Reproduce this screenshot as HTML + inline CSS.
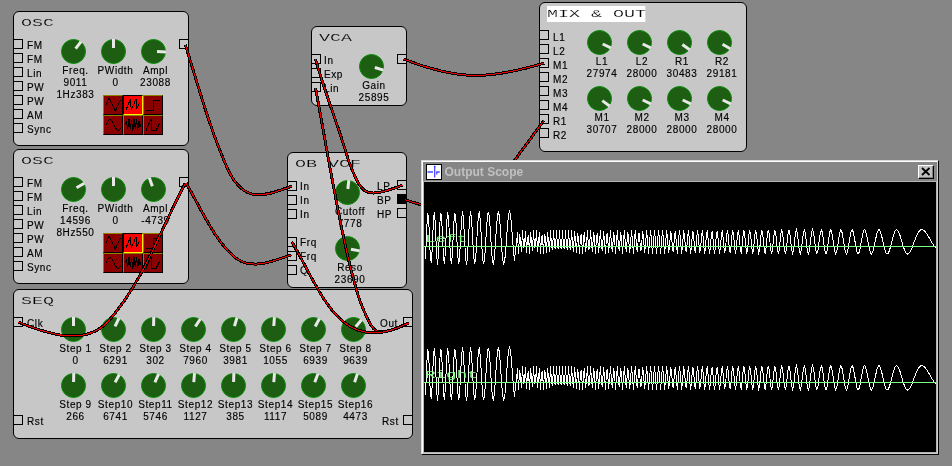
<!DOCTYPE html>
<html><head><meta charset="utf-8"><title>Synth</title>
<style>
html,body{margin:0;padding:0;}
body{width:952px;height:466px;background:#868686;position:relative;overflow:hidden;font-family:"Liberation Sans",sans-serif;font-size:11px;color:#000;}
#root{position:absolute;left:0;top:0;width:952px;height:466px;will-change:transform;}
.pn{position:absolute;box-sizing:border-box;background:#c7c7c7;border:1px solid #000;border-radius:6px;}
.tt{position:absolute;font-family:"Liberation Mono",monospace;font-size:11px;line-height:15px;padding-top:1px;white-space:pre;transform:scaleX(1.667);transform-origin:0 0;-webkit-text-stroke:0.16px #c7c7c7;}
.pt{position:absolute;box-sizing:border-box;width:10px;height:10px;border:1px solid #000;background:#c7c7c7;}
.lb{position:absolute;font-size:10px;letter-spacing:0.6px;line-height:12px;padding-top:1px;white-space:nowrap;-webkit-text-stroke:0.15px #000;}
.cl{position:absolute;width:80px;text-align:center;font-size:10px;letter-spacing:0.6px;line-height:12px;padding-top:1px;white-space:nowrap;-webkit-text-stroke:0.15px #000;}
.kn{position:absolute;box-sizing:border-box;width:25px;height:25px;border-radius:50%;background:#1e5e12;border:1px solid #0a8a0a;}
.kn i{position:absolute;left:10px;top:-1px;width:3px;height:25px;transform-origin:1.5px 12.5px;}
.kn i:before{content:"";position:absolute;left:0;top:0;width:3px;height:9px;background:#e8e8e8;}
.wb{position:absolute;box-sizing:border-box;width:20px;height:20px;border:1px solid;}
.wires{position:absolute;left:0;top:0;}
.win{position:absolute;box-sizing:border-box;border:1px solid;border-color:#d8d8d8 #000 #000 #d8d8d8;}
.win2{position:absolute;left:0;top:0;right:0;bottom:0;box-sizing:border-box;background:#868686;border:1px solid;border-color:#fff #d0d0d0 #d0d0d0 #fff;}
.ico{position:absolute;left:3px;top:2px;width:14px;height:14px;background:#fff;border:1px solid #000;}
.wt{position:absolute;left:21.5px;top:3px;font-weight:bold;font-size:12px;line-height:14px;color:#c0c0c0;white-space:nowrap;}
.cb{position:absolute;left:495px;top:3px;width:14px;height:12px;background:#c0c0c0;border:1px solid;border-color:#fff #000 #000 #fff;box-shadow:inset -1px -1px 0 #808080;}
.cv{position:absolute;left:0px;top:19px;width:512px;height:270px;background:#000;border:1px solid #b4b4b4;}
.gl{position:absolute;color:#80ff80;font-family:"Liberation Mono",monospace;font-size:11px;line-height:12px;white-space:pre;transform:scaleX(1.6);transform-origin:0 0;}
</style></head>
<body>
<div id="root">
<div class="pn" style="left:13px;top:11px;width:176px;height:135px;"></div>
<div class="tt" style="left:21px;top:15px;">OSC</div>
<div class="pt" style="left:13px;top:39px;"></div>
<div class="lb" style="left:27px;top:39px;">FM</div>
<div class="pt" style="left:13px;top:53px;"></div>
<div class="lb" style="left:27px;top:53px;">FM</div>
<div class="pt" style="left:13px;top:67px;"></div>
<div class="lb" style="left:27px;top:67px;">Lin</div>
<div class="pt" style="left:13px;top:81px;"></div>
<div class="lb" style="left:27px;top:81px;">PW</div>
<div class="pt" style="left:13px;top:95px;"></div>
<div class="lb" style="left:27px;top:95px;">PW</div>
<div class="pt" style="left:13px;top:109px;"></div>
<div class="lb" style="left:27px;top:109px;">AM</div>
<div class="pt" style="left:13px;top:123px;"></div>
<div class="lb" style="left:27px;top:123px;">Sync</div>
<div class="pt" style="left:179px;top:39px;"></div>
<div class="kn" style="left:60.5px;top:38.5px;"><i style="transform:rotate(37.1deg)"></i></div>
<div class="cl" style="left:35.5px;top:64px;">Freq.</div>
<div class="cl" style="left:35.5px;top:76px;">9011</div>
<div class="kn" style="left:100.5px;top:38.5px;"><i style="transform:rotate(0deg)"></i></div>
<div class="cl" style="left:75.5px;top:64px;">PWidth</div>
<div class="cl" style="left:75.5px;top:76px;">0</div>
<div class="kn" style="left:140.5px;top:38.5px;"><i style="transform:rotate(92deg)"></i></div>
<div class="cl" style="left:115.5px;top:64px;">Ampl</div>
<div class="cl" style="left:115.5px;top:76px;">23088</div>
<div class="cl" style="left:35.5px;top:88px;">1Hz383</div>
<div class="wb" style="left:103px;top:95px;background:#8a0000;border-color:#8a8200 #000 #000 #8a8200;"><svg width="20" height="20" viewBox="0 0 20 20" shape-rendering="crispEdges" style="position:absolute;left:-1px;top:-1px"><path d="M3 10 L6 3 L12.3 16 L17.5 5" fill="none" stroke="#000" stroke-width="1"/></svg></div>
<div class="wb" style="left:123px;top:95px;background:#ff0000;border-color:#000 #fff000 #fff000 #000;"><svg width="20" height="20" viewBox="0 0 20 20" shape-rendering="crispEdges" style="position:absolute;left:-1px;top:-1px"><path d="M3 15 L7.4 4 L8.3 15 L13 4 L13.7 14 L16.3 8" fill="none" stroke="#000" stroke-width="1"/></svg></div>
<div class="wb" style="left:143px;top:95px;background:#8a0000;border-color:#8a8200 #000 #000 #8a8200;"><svg width="20" height="20" viewBox="0 0 20 20" shape-rendering="crispEdges" style="position:absolute;left:-1px;top:-1px"><path d="M3 15.5 H10.5 V5.5 H17" fill="none" stroke="#000" stroke-width="1"/></svg></div>
<div class="wb" style="left:103px;top:115px;background:#8a0000;border-color:#8a8200 #000 #000 #8a8200;"><svg width="20" height="20" viewBox="0 0 20 20" shape-rendering="crispEdges" style="position:absolute;left:-1px;top:-1px"><path d="M3 9.7 L5 6 Q7 2.5 9 6 L13 13.5 Q15 17 16.5 14.5 L17.5 13" fill="none" stroke="#000" stroke-width="1"/></svg></div>
<div class="wb" style="left:123px;top:115px;background:#8a0000;border-color:#8a8200 #000 #000 #8a8200;"><svg width="20" height="20" viewBox="0 0 20 20" shape-rendering="crispEdges" style="position:absolute;left:-1px;top:-1px"><path d="M2.5 9.5 L3.5 7 L4.7 14 L6 4 L7.3 14 L8.5 5 L9.8 16 L11 3.5 L12.3 14 L13.5 4.5 L14.8 14.5 L16 6 L17 12 L17.8 9" fill="none" stroke="#000" stroke-width="1"/></svg></div>
<div class="wb" style="left:143px;top:115px;background:#8a0000;border-color:#8a8200 #000 #000 #8a8200;"><svg width="20" height="20" viewBox="0 0 20 20" shape-rendering="crispEdges" style="position:absolute;left:-1px;top:-1px"><path d="M3 15.5 L8 4 L8.6 15 H13.3 L16.6 8.3" fill="none" stroke="#000" stroke-width="1"/></svg></div>
<div class="pn" style="left:13px;top:149px;width:176px;height:135px;"></div>
<div class="tt" style="left:21px;top:153px;">OSC</div>
<div class="pt" style="left:13px;top:177px;"></div>
<div class="lb" style="left:27px;top:177px;">FM</div>
<div class="pt" style="left:13px;top:191px;"></div>
<div class="lb" style="left:27px;top:191px;">FM</div>
<div class="pt" style="left:13px;top:205px;"></div>
<div class="lb" style="left:27px;top:205px;">Lin</div>
<div class="pt" style="left:13px;top:219px;"></div>
<div class="lb" style="left:27px;top:219px;">PW</div>
<div class="pt" style="left:13px;top:233px;"></div>
<div class="lb" style="left:27px;top:233px;">PW</div>
<div class="pt" style="left:13px;top:247px;"></div>
<div class="lb" style="left:27px;top:247px;">AM</div>
<div class="pt" style="left:13px;top:261px;"></div>
<div class="lb" style="left:27px;top:261px;">Sync</div>
<div class="pt" style="left:179px;top:177px;"></div>
<div class="kn" style="left:60.5px;top:176.5px;"><i style="transform:rotate(60.1deg)"></i></div>
<div class="cl" style="left:35.5px;top:202px;">Freq.</div>
<div class="cl" style="left:35.5px;top:214px;">14596</div>
<div class="kn" style="left:100.5px;top:176.5px;"><i style="transform:rotate(0deg)"></i></div>
<div class="cl" style="left:75.5px;top:202px;">PWidth</div>
<div class="cl" style="left:75.5px;top:214px;">0</div>
<div class="kn" style="left:140.5px;top:176.5px;"><i style="transform:rotate(-19.5deg)"></i></div>
<div class="cl" style="left:115.5px;top:202px;">Ampl</div>
<div class="cl" style="left:115.5px;top:214px;">-4739</div>
<div class="cl" style="left:35.5px;top:226px;">8Hz550</div>
<div class="wb" style="left:103px;top:233px;background:#8a0000;border-color:#8a8200 #000 #000 #8a8200;"><svg width="20" height="20" viewBox="0 0 20 20" shape-rendering="crispEdges" style="position:absolute;left:-1px;top:-1px"><path d="M3 10 L6 3 L12.3 16 L17.5 5" fill="none" stroke="#000" stroke-width="1"/></svg></div>
<div class="wb" style="left:123px;top:233px;background:#ff0000;border-color:#000 #fff000 #fff000 #000;"><svg width="20" height="20" viewBox="0 0 20 20" shape-rendering="crispEdges" style="position:absolute;left:-1px;top:-1px"><path d="M3 15 L7.4 4 L8.3 15 L13 4 L13.7 14 L16.3 8" fill="none" stroke="#000" stroke-width="1"/></svg></div>
<div class="wb" style="left:143px;top:233px;background:#8a0000;border-color:#8a8200 #000 #000 #8a8200;"><svg width="20" height="20" viewBox="0 0 20 20" shape-rendering="crispEdges" style="position:absolute;left:-1px;top:-1px"><path d="M3 15.5 H10.5 V5.5 H17" fill="none" stroke="#000" stroke-width="1"/></svg></div>
<div class="wb" style="left:103px;top:253px;background:#8a0000;border-color:#8a8200 #000 #000 #8a8200;"><svg width="20" height="20" viewBox="0 0 20 20" shape-rendering="crispEdges" style="position:absolute;left:-1px;top:-1px"><path d="M3 9.7 L5 6 Q7 2.5 9 6 L13 13.5 Q15 17 16.5 14.5 L17.5 13" fill="none" stroke="#000" stroke-width="1"/></svg></div>
<div class="wb" style="left:123px;top:253px;background:#8a0000;border-color:#8a8200 #000 #000 #8a8200;"><svg width="20" height="20" viewBox="0 0 20 20" shape-rendering="crispEdges" style="position:absolute;left:-1px;top:-1px"><path d="M2.5 9.5 L3.5 7 L4.7 14 L6 4 L7.3 14 L8.5 5 L9.8 16 L11 3.5 L12.3 14 L13.5 4.5 L14.8 14.5 L16 6 L17 12 L17.8 9" fill="none" stroke="#000" stroke-width="1"/></svg></div>
<div class="wb" style="left:143px;top:253px;background:#8a0000;border-color:#8a8200 #000 #000 #8a8200;"><svg width="20" height="20" viewBox="0 0 20 20" shape-rendering="crispEdges" style="position:absolute;left:-1px;top:-1px"><path d="M3 15.5 L8 4 L8.6 15 H13.3 L16.6 8.3" fill="none" stroke="#000" stroke-width="1"/></svg></div>
<div class="pn" style="left:13px;top:289px;width:400px;height:150px;"></div>
<div class="tt" style="left:21px;top:293px;">SEQ</div>
<div class="pt" style="left:13px;top:317px;"></div>
<div class="lb" style="left:27px;top:317px;">Clk</div>
<div class="pt" style="left:13px;top:415px;"></div>
<div class="lb" style="left:27px;top:415px;">Rst</div>
<div class="pt" style="left:403px;top:317px;"></div>
<div class="lb" style="left:380px;top:317px;">Out</div>
<div class="pt" style="left:403px;top:415px;"></div>
<div class="lb" style="left:382px;top:415px;">Rst</div>
<div class="kn" style="left:60.5px;top:316.5px;"><i style="transform:rotate(0.0deg)"></i></div>
<div class="cl" style="left:35.5px;top:342px;">Step 1</div>
<div class="cl" style="left:35.5px;top:354px;">0</div>
<div class="kn" style="left:100.5px;top:316.5px;"><i style="transform:rotate(25.9deg)"></i></div>
<div class="cl" style="left:75.5px;top:342px;">Step 2</div>
<div class="cl" style="left:75.5px;top:354px;">6291</div>
<div class="kn" style="left:140.5px;top:316.5px;"><i style="transform:rotate(1.2deg)"></i></div>
<div class="cl" style="left:115.5px;top:342px;">Step 3</div>
<div class="cl" style="left:115.5px;top:354px;">302</div>
<div class="kn" style="left:180.5px;top:316.5px;"><i style="transform:rotate(32.8deg)"></i></div>
<div class="cl" style="left:155.5px;top:342px;">Step 4</div>
<div class="cl" style="left:155.5px;top:354px;">7960</div>
<div class="kn" style="left:220.5px;top:316.5px;"><i style="transform:rotate(16.4deg)"></i></div>
<div class="cl" style="left:195.5px;top:342px;">Step 5</div>
<div class="cl" style="left:195.5px;top:354px;">3981</div>
<div class="kn" style="left:260.5px;top:316.5px;"><i style="transform:rotate(4.3deg)"></i></div>
<div class="cl" style="left:235.5px;top:342px;">Step 6</div>
<div class="cl" style="left:235.5px;top:354px;">1055</div>
<div class="kn" style="left:300.5px;top:316.5px;"><i style="transform:rotate(28.6deg)"></i></div>
<div class="cl" style="left:275.5px;top:342px;">Step 7</div>
<div class="cl" style="left:275.5px;top:354px;">6939</div>
<div class="kn" style="left:340.5px;top:316.5px;"><i style="transform:rotate(39.7deg)"></i></div>
<div class="cl" style="left:315.5px;top:342px;">Step 8</div>
<div class="cl" style="left:315.5px;top:354px;">9639</div>
<div class="kn" style="left:60.5px;top:372.5px;"><i style="transform:rotate(1.1deg)"></i></div>
<div class="cl" style="left:35.5px;top:398px;">Step 9</div>
<div class="cl" style="left:35.5px;top:410px;">266</div>
<div class="kn" style="left:100.5px;top:372.5px;"><i style="transform:rotate(27.8deg)"></i></div>
<div class="cl" style="left:75.5px;top:398px;">Step10</div>
<div class="cl" style="left:75.5px;top:410px;">6741</div>
<div class="kn" style="left:140.5px;top:372.5px;"><i style="transform:rotate(23.7deg)"></i></div>
<div class="cl" style="left:115.5px;top:398px;">Step11</div>
<div class="cl" style="left:115.5px;top:410px;">5746</div>
<div class="kn" style="left:180.5px;top:372.5px;"><i style="transform:rotate(4.6deg)"></i></div>
<div class="cl" style="left:155.5px;top:398px;">Step12</div>
<div class="cl" style="left:155.5px;top:410px;">1127</div>
<div class="kn" style="left:220.5px;top:372.5px;"><i style="transform:rotate(1.6deg)"></i></div>
<div class="cl" style="left:195.5px;top:398px;">Step13</div>
<div class="cl" style="left:195.5px;top:410px;">385</div>
<div class="kn" style="left:260.5px;top:372.5px;"><i style="transform:rotate(4.6deg)"></i></div>
<div class="cl" style="left:235.5px;top:398px;">Step14</div>
<div class="cl" style="left:235.5px;top:410px;">1117</div>
<div class="kn" style="left:300.5px;top:372.5px;"><i style="transform:rotate(21.0deg)"></i></div>
<div class="cl" style="left:275.5px;top:398px;">Step15</div>
<div class="cl" style="left:275.5px;top:410px;">5089</div>
<div class="kn" style="left:340.5px;top:372.5px;"><i style="transform:rotate(18.4deg)"></i></div>
<div class="cl" style="left:315.5px;top:398px;">Step16</div>
<div class="cl" style="left:315.5px;top:410px;">4473</div>
<div class="pn" style="left:311px;top:26px;width:96px;height:80px;"></div>
<div class="tt" style="left:319px;top:30px;">VCA</div>
<div class="pt" style="left:311px;top:54px;"></div>
<div class="lb" style="left:324px;top:54px;">In</div>
<div class="pt" style="left:311px;top:68px;"></div>
<div class="lb" style="left:324px;top:68px;">Exp</div>
<div class="pt" style="left:311px;top:82px;"></div>
<div class="lb" style="left:324px;top:82px;">Lin</div>
<div class="pt" style="left:397px;top:54px;"></div>
<div class="kn" style="left:359.0px;top:54.0px;"><i style="transform:rotate(106.7deg)"></i></div>
<div class="cl" style="left:334.0px;top:79px;">Gain</div>
<div class="cl" style="left:334.0px;top:91px;">25895</div>
<div class="pn" style="left:287px;top:152px;width:120px;height:136px;"></div>
<div class="tt" style="left:295px;top:156px;">OB VCF</div>
<div class="pt" style="left:287px;top:181px;"></div>
<div class="lb" style="left:300px;top:180px;">In</div>
<div class="pt" style="left:287px;top:195px;"></div>
<div class="lb" style="left:300px;top:194px;">In</div>
<div class="pt" style="left:287px;top:209px;"></div>
<div class="lb" style="left:300px;top:208px;">In</div>
<div class="pt" style="left:287px;top:237px;"></div>
<div class="lb" style="left:300px;top:236px;">Frq</div>
<div class="pt" style="left:287px;top:251px;"></div>
<div class="lb" style="left:300px;top:250px;">Frq</div>
<div class="pt" style="left:287px;top:265px;"></div>
<div class="lb" style="left:300px;top:264px;">Q</div>
<div class="pt" style="left:397px;top:180px;"></div>
<div class="lb" style="left:377px;top:180px;">LP</div>
<div class="pt" style="left:397px;top:194px;background:#000;"></div>
<div class="lb" style="left:377px;top:194px;">BP</div>
<div class="pt" style="left:397px;top:208px;"></div>
<div class="lb" style="left:377px;top:208px;">HP</div>
<div class="kn" style="left:335.0px;top:179.5px;"><i style="transform:rotate(6deg)"></i></div>
<div class="cl" style="left:310.0px;top:205px;">Cutoff</div>
<div class="cl" style="left:310.0px;top:217px;">7778</div>
<div class="kn" style="left:335.0px;top:236.0px;"><i style="transform:rotate(101deg)"></i></div>
<div class="cl" style="left:310.0px;top:261px;">Reso</div>
<div class="cl" style="left:310.0px;top:273px;">23690</div>
<div class="pn" style="left:539px;top:2px;width:208px;height:150px;"></div>
<div class="tt" style="left:547px;top:6px;background:#fff;-webkit-text-stroke-color:#fff;">MIX &amp; OUT</div>
<div class="pt" style="left:539px;top:30px;"></div>
<div class="lb" style="left:553px;top:31px;">L1</div>
<div class="pt" style="left:539px;top:44px;"></div>
<div class="lb" style="left:553px;top:45px;">L2</div>
<div class="pt" style="left:539px;top:58px;"></div>
<div class="lb" style="left:553px;top:59px;">M1</div>
<div class="pt" style="left:539px;top:72px;"></div>
<div class="lb" style="left:553px;top:73px;">M2</div>
<div class="pt" style="left:539px;top:86px;"></div>
<div class="lb" style="left:553px;top:87px;">M3</div>
<div class="pt" style="left:539px;top:100px;"></div>
<div class="lb" style="left:553px;top:101px;">M4</div>
<div class="pt" style="left:539px;top:114px;"></div>
<div class="lb" style="left:553px;top:115px;">R1</div>
<div class="pt" style="left:539px;top:128px;"></div>
<div class="lb" style="left:553px;top:129px;">R2</div>
<div class="kn" style="left:587.0px;top:30.0px;"><i style="transform:rotate(115.2deg)"></i></div>
<div class="cl" style="left:562.0px;top:55.0px;">L1</div>
<div class="cl" style="left:562.0px;top:67.0px;">27974</div>
<div class="kn" style="left:627.0px;top:30.0px;"><i style="transform:rotate(115.4deg)"></i></div>
<div class="cl" style="left:602.0px;top:55.0px;">L2</div>
<div class="cl" style="left:602.0px;top:67.0px;">28000</div>
<div class="kn" style="left:667.0px;top:30.0px;"><i style="transform:rotate(125.6deg)"></i></div>
<div class="cl" style="left:642.0px;top:55.0px;">R1</div>
<div class="cl" style="left:642.0px;top:67.0px;">30483</div>
<div class="kn" style="left:707.0px;top:30.0px;"><i style="transform:rotate(120.2deg)"></i></div>
<div class="cl" style="left:682.0px;top:55.0px;">R2</div>
<div class="cl" style="left:682.0px;top:67.0px;">29181</div>
<div class="kn" style="left:587.0px;top:86.0px;"><i style="transform:rotate(126.5deg)"></i></div>
<div class="cl" style="left:562.0px;top:111.0px;">M1</div>
<div class="cl" style="left:562.0px;top:123.0px;">30707</div>
<div class="kn" style="left:627.0px;top:86.0px;"><i style="transform:rotate(115.4deg)"></i></div>
<div class="cl" style="left:602.0px;top:111.0px;">M2</div>
<div class="cl" style="left:602.0px;top:123.0px;">28000</div>
<div class="kn" style="left:667.0px;top:86.0px;"><i style="transform:rotate(115.4deg)"></i></div>
<div class="cl" style="left:642.0px;top:111.0px;">M3</div>
<div class="cl" style="left:642.0px;top:123.0px;">28000</div>
<div class="kn" style="left:707.0px;top:86.0px;"><i style="transform:rotate(115.4deg)"></i></div>
<div class="cl" style="left:682.0px;top:111.0px;">M4</div>
<div class="cl" style="left:682.0px;top:123.0px;">28000</div>
<svg class="wires" width="952" height="466" viewBox="0 0 952 466" shape-rendering="crispEdges"><path d="M185.3 44.6 C198.4 86.2 210.3 130.6 228.3 170.4 C244.0 201.8 260.7 198.2 292.0 186.0" fill="none" stroke="#000" stroke-width="3"/><path d="M185.3 44.6 C198.4 86.2 210.3 130.6 228.3 170.4 C244.0 201.8 260.7 198.2 292.0 186.0" fill="none" stroke="#f00000" stroke-width="1"/><path d="M186.0 182.9 C200.0 206.3 214.8 242.3 236.9 258.8 C253.2 270.3 274.8 260.3 291.5 254.9" fill="none" stroke="#000" stroke-width="3"/><path d="M186.0 182.9 C200.0 206.3 214.8 242.3 236.9 258.8 C253.2 270.3 274.8 260.3 291.5 254.9" fill="none" stroke="#f00000" stroke-width="1"/><path d="M18.3 322.1 C45.6 333.0 83.3 347.0 107.6 322.1 C143.1 282.5 160.6 229.2 185.4 183.1" fill="none" stroke="#000" stroke-width="3"/><path d="M18.3 322.1 C45.6 333.0 83.3 347.0 107.6 322.1 C143.1 282.5 160.6 229.2 185.4 183.1" fill="none" stroke="#f00000" stroke-width="1"/><path d="M315.5 59.2 C325.2 93.7 338.4 125.6 348.3 160.0 C362.3 196.1 364.0 199.5 402.5 185.2" fill="none" stroke="#000" stroke-width="3"/><path d="M315.5 59.2 C325.2 93.7 338.4 125.6 348.3 160.0 C362.3 196.1 364.0 199.5 402.5 185.2" fill="none" stroke="#f00000" stroke-width="1"/><path d="M315.5 87.7 C324.6 136.7 332.8 186.3 343.1 235.0 C347.8 257.3 353.1 281.1 360.5 302.6 C374.8 336.5 374.4 338.0 408.9 322.9" fill="none" stroke="#000" stroke-width="3"/><path d="M315.5 87.7 C324.6 136.7 332.8 186.3 343.1 235.0 C347.8 257.3 353.1 281.1 360.5 302.6 C374.8 336.5 374.4 338.0 408.9 322.9" fill="none" stroke="#f00000" stroke-width="1"/><path d="M291.8 241.8 C320.9 290.1 339.6 359.0 408.9 322.9" fill="none" stroke="#000" stroke-width="3"/><path d="M291.8 241.8 C320.9 290.1 339.6 359.0 408.9 322.9" fill="none" stroke="#f00000" stroke-width="1"/><path d="M403.4 59.0 C458.7 80.5 488.1 79.9 544.1 63.1" fill="none" stroke="#000" stroke-width="3"/><path d="M403.4 59.0 C458.7 80.5 488.1 79.9 544.1 63.1" fill="none" stroke="#f00000" stroke-width="1"/><path d="M404.7 199.7 L440 210.6" fill="none" stroke="#000" stroke-width="3"/><path d="M404.7 199.7 L440 210.6" fill="none" stroke="#f00000" stroke-width="1"/><path d="M544.1 120.3 L500 180.1" fill="none" stroke="#000" stroke-width="3"/><path d="M544.1 120.3 L500 180.1" fill="none" stroke="#f00000" stroke-width="1"/></svg>
<div class="win" style="left:421px;top:160px;width:518px;height:295px;"><div class="win2">
<div class="ico"><svg width="14" height="14" viewBox="0 0 14 14"><path d="M0.5 7 H6 M7.7 1.5 V12.5 M9.8 9.5 V7 H12.8" stroke="#4a4aff" stroke-width="1.3" fill="none"/><circle cx="7.7" cy="1.6" r="0.8" fill="#2020ff"/></svg></div>
<div class="wt">Output Scope</div>
<div class="cb"><svg width="14" height="12" viewBox="0 0 14 12" style="position:absolute;left:0;top:0"><path d="M3 2 L10.5 9 M10.5 2 L3 9" stroke="#000" stroke-width="1.8" fill="none"/></svg></div>
<div class="cv"><svg width="512" height="270" viewBox="0 0 512 270" shape-rendering="crispEdges" style="position:absolute;left:0;top:0">
<polyline points="1.5,76.7 2.5,52.7 3.5,31.9 4.5,33.8 5.5,56.2 6.5,78.4 7.5,80.2 8.5,60.3 9.5,36.7 10.5,30.1 11.5,46.1 12.5,70.5 13.5,82.5 14.5,72.2 15.5,48.6 16.5,31.1 17.5,33.9 18.5,54.4 19.5,76.1 20.5,81.9 21.5,67.7 22.5,44.6 23.5,30.2 24.5,35.1 25.5,55.4 26.5,76.0 27.5,82.2 28.5,69.7 29.5,47.7 30.5,31.5 31.5,32.2 32.5,48.9 33.5,70.3 34.5,82.1 35.5,77.0 36.5,58.4 37.5,38.5 38.5,29.5 39.5,36.9 40.5,55.8 41.5,74.7 42.5,82.5 43.5,74.8 44.5,56.4 45.5,37.9 46.5,29.5 47.5,35.8 48.5,52.9 49.5,71.5 50.5,81.9 51.5,78.9 52.5,64.2 53.5,45.5 54.5,32.1 55.5,30.4 56.5,41.0 57.5,58.5 58.5,74.8 59.5,82.4 60.5,78.1 61.5,64.1 62.5,46.7 63.5,33.4 64.5,29.7 65.5,36.8 66.5,51.6 67.5,68.1 68.5,79.7 69.5,82.1 70.5,74.7 71.5,60.4 72.5,44.6 73.5,33.0 74.5,29.6 75.5,35.3 76.5,47.9 77.5,63.1 78.5,75.8 79.5,82.2 80.5,80.3 81.5,71.0 82.5,57.4 83.5,43.4 84.5,33.2 85.5,29.5 86.5,33.1 87.5,42.9 88.5,56.0 89.5,68.9 90.5,78.5 91.5,67.7 92.5,60.8 93.5,50.4 94.5,71.9 95.5,52.3 96.5,58.1 97.5,69.8 98.5,47.9 99.5,66.1 100.5,63.3 101.5,48.8 102.5,71.0 103.5,56.0 104.5,53.6 105.5,71.8 106.5,50.4 107.5,59.9 108.5,69.1 109.5,47.8 110.5,65.6 111.5,64.5 112.5,48.1 113.5,69.6 114.5,59.5 115.5,50.3 116.5,71.6 117.5,55.1 118.5,53.5 119.5,71.9 120.5,51.8 121.5,56.9 122.5,71.1 123.5,49.6 124.5,60.0 125.5,69.8 126.5,48.4 127.5,62.4 128.5,68.4 129.5,47.9 130.5,64.1 131.5,67.1 132.5,47.6 133.5,65.2 134.5,66.3 135.5,47.6 136.5,65.7 137.5,66.0 138.5,47.6 139.5,65.7 140.5,66.2 141.5,47.6 142.5,65.1 143.5,67.0 144.5,47.7 145.5,63.9 146.5,68.1 147.5,48.1 148.5,62.0 149.5,69.6 150.5,48.9 151.5,59.5 152.5,70.9 153.5,50.6 154.5,56.4 155.5,71.9 156.5,53.3 157.5,53.0 158.5,71.8 159.5,57.1 160.5,49.9 161.5,70.3 162.5,61.6 163.5,48.0 164.5,67.0 165.5,66.2 166.5,47.8 167.5,62.2 168.5,70.1 169.5,50.0 170.5,56.4 171.5,72.0 172.5,54.8 173.5,51.1 174.5,70.7 175.5,61.3 176.5,47.9 177.5,66.0 178.5,67.8 179.5,48.6 180.5,58.7 181.5,71.7 182.5,53.8 183.5,51.4 184.5,70.7 185.5,62.0 186.5,47.7 187.5,64.2 188.5,69.6 189.5,50.3 190.5,54.9 191.5,71.8 192.5,58.9 193.5,48.2 194.5,66.2 195.5,68.5 196.5,49.6 197.5,55.5 198.5,71.9 199.5,59.2 200.5,48.0 201.5,64.9 202.5,69.8 203.5,51.1 204.5,52.8 205.5,70.8 206.5,63.3 207.5,47.7 208.5,59.8 209.5,71.9 210.5,56.6 211.5,48.5 212.5,65.7 213.5,69.8 214.5,51.8 215.5,51.4 216.5,69.3 217.5,66.6 218.5,49.2 219.5,54.5 220.5,71.1 221.5,63.7 222.5,48.0 223.5,57.1 224.5,71.8 225.5,61.6 226.5,47.7 227.5,58.7 228.5,72.0 229.5,60.4 230.5,47.6 231.5,59.3 232.5,72.0 233.5,60.4 234.5,47.6 235.5,58.8 236.5,71.9 237.5,61.4 238.5,47.8 239.5,57.3 240.5,71.6 241.5,63.4 242.5,48.4 243.5,54.8 244.5,70.6 245.5,66.3 246.5,50.0 247.5,51.7 248.5,68.2 249.5,69.4 250.5,53.3 251.5,48.9 252.5,64.0 253.5,71.7 254.5,58.4 255.5,47.6 256.5,58.0 257.5,71.5 258.5,64.9 259.5,49.6 260.5,51.7 261.5,67.5 262.5,70.4 263.5,55.7 264.5,47.8 265.5,59.7 266.5,71.8 267.5,64.4 268.5,49.6 269.5,51.1 270.5,66.4 271.5,71.2 272.5,58.1 273.5,47.6 274.5,56.0 275.5,70.2 276.5,68.5 277.5,53.6 278.5,48.1 279.5,60.1 280.5,71.7 281.5,65.7 282.5,51.1 283.5,49.2 284.5,62.6 285.5,72.0 286.5,64.0 287.5,50.1 288.5,49.8 289.5,63.5 290.5,72.0 291.5,63.8 292.5,50.1 293.5,49.6 294.5,62.8 295.5,71.9 296.5,65.1 297.5,51.3 298.5,48.6 299.5,60.4 300.5,71.4 301.5,67.6 302.5,54.0 303.5,47.7 304.5,56.5 305.5,69.3 306.5,70.5 307.5,58.7 308.5,48.2 309.5,51.6 310.5,64.7 311.5,72.0 312.5,65.1 313.5,52.1 314.5,47.9 315.5,57.2 316.5,69.4 317.5,70.8 318.5,60.0 319.5,49.0 320.5,49.8 321.5,61.3 322.5,71.2 323.5,69.0 324.5,57.1 325.5,48.1 326.5,51.2 327.5,63.1 328.5,71.6 329.5,68.3 330.5,56.5 331.5,48.0 332.5,51.1 333.5,62.6 334.5,71.4 335.5,69.2 336.5,58.2 337.5,48.7 338.5,49.5 339.5,59.7 340.5,70.0 341.5,71.0 342.5,62.1 343.5,51.2 344.5,47.8 345.5,54.7 346.5,66.0 347.5,72.0 348.5,67.7 349.5,57.0 350.5,48.6 351.5,49.3 352.5,58.4 353.5,68.6 354.5,71.9 355.5,65.7 356.5,55.0 357.5,48.0 358.5,49.9 359.5,59.2 360.5,68.8 361.5,71.9 362.5,66.2 363.5,56.0 364.5,48.5 365.5,48.9 366.5,56.8 367.5,66.7 368.5,71.9 369.5,69.0 370.5,60.1 371.5,51.0 372.5,47.6 373.5,52.0 374.5,61.2 375.5,69.5 376.5,71.9 377.5,66.9 378.5,57.7 379.5,49.8 380.5,47.8 381.5,52.7 382.5,61.6 383.5,69.5 384.5,71.9 385.5,67.8 386.5,59.3 387.5,51.2 388.5,47.6 389.5,50.4 390.5,57.9 391.5,66.4 392.5,71.5 393.5,70.9 394.5,64.8 395.5,56.4 396.5,49.7 397.5,47.7 398.5,51.2 399.5,58.6 400.5,66.5 401.5,71.4 402.5,71.3 403.5,66.2 404.5,58.6 405.5,51.4 406.5,47.8 407.5,49.0 408.5,54.4 409.5,61.9 410.5,68.6 411.5,71.9 412.5,70.7 413.5,65.5 414.5,58.4 415.5,51.8 416.5,48.0 417.5,48.3 418.5,52.5 419.5,59.0 420.5,65.8 421.5,70.6 422.5,72.0 423.5,69.6 424.5,64.3 425.5,57.7 426.5,51.7 427.5,48.2 428.5,47.9 429.5,50.9 430.5,56.3 431.5,62.6 432.5,68.1 433.5,71.4 434.5,71.8 435.5,69.2 436.5,64.3 437.5,58.5 438.5,53.0 439.5,49.1 440.5,47.6 441.5,48.8 442.5,52.4 443.5,57.4 444.5,62.9 445.5,67.7 446.5,70.9 447.5,72.0 448.5,70.7 449.5,67.5 450.5,62.9 451.5,57.9 452.5,53.2 453.5,49.6 454.5,47.8 455.5,47.9 456.5,49.8 457.5,53.2 458.5,57.6 459.5,62.2 460.5,66.4 461.5,69.7 462.5,71.6 463.5,71.9 464.5,70.8 465.5,68.3 466.5,64.9 467.5,60.9 468.5,56.8 469.5,53.2 470.5,50.2 471.5,48.3 472.5,47.6 473.5,48.1 474.5,49.6 475.5,52.0 476.5,55.1 477.5,58.5 478.5,61.9 479.5,65.2 480.5,67.9 481.5,70.1 482.5,71.4 483.5,72.0 484.5,71.7 485.5,70.7 486.5,69.1 487.5,66.9 488.5,64.4 489.5,61.7 490.5,59.0 491.5,56.4 492.5,53.9 493.5,51.8 494.5,50.1 495.5,48.8 496.5,48.0 497.5,47.6 498.5,47.7 499.5,48.2 500.5,49.0 501.5,50.1 502.5,51.4 503.5,53.0 504.5,54.6 505.5,56.4 506.5,58.1 507.5,59.8 508.5,61.5 509.5,63.1 510.5,64.5 511.5,65.9" fill="none" stroke="#fff" stroke-width="1"/>
<polyline points="1.5,212.7 2.5,188.7 3.5,167.9 4.5,169.8 5.5,192.2 6.5,214.4 7.5,216.2 8.5,196.3 9.5,172.7 10.5,166.1 11.5,182.1 12.5,206.5 13.5,218.5 14.5,208.2 15.5,184.6 16.5,167.1 17.5,169.9 18.5,190.4 19.5,212.1 20.5,217.9 21.5,203.7 22.5,180.6 23.5,166.2 24.5,171.1 25.5,191.4 26.5,212.0 27.5,218.2 28.5,205.7 29.5,183.7 30.5,167.5 31.5,168.2 32.5,184.9 33.5,206.3 34.5,218.1 35.5,213.0 36.5,194.4 37.5,174.5 38.5,165.5 39.5,172.9 40.5,191.8 41.5,210.7 42.5,218.5 43.5,210.8 44.5,192.4 45.5,173.9 46.5,165.5 47.5,171.8 48.5,188.9 49.5,207.5 50.5,217.9 51.5,214.9 52.5,200.2 53.5,181.5 54.5,168.1 55.5,166.4 56.5,177.0 57.5,194.5 58.5,210.8 59.5,218.4 60.5,214.1 61.5,200.1 62.5,182.7 63.5,169.4 64.5,165.7 65.5,172.8 66.5,187.6 67.5,204.1 68.5,215.7 69.5,218.1 70.5,210.7 71.5,196.4 72.5,180.6 73.5,169.0 74.5,165.6 75.5,171.3 76.5,183.9 77.5,199.1 78.5,211.8 79.5,218.2 80.5,216.3 81.5,207.0 82.5,193.4 83.5,179.4 84.5,169.2 85.5,165.5 86.5,169.1 87.5,178.9 88.5,192.0 89.5,204.9 90.5,214.5 91.5,203.7 92.5,196.8 93.5,186.4 94.5,207.9 95.5,188.3 96.5,194.1 97.5,205.8 98.5,183.9 99.5,202.1 100.5,199.3 101.5,184.8 102.5,207.0 103.5,192.0 104.5,189.6 105.5,207.8 106.5,186.4 107.5,195.9 108.5,205.1 109.5,183.8 110.5,201.6 111.5,200.5 112.5,184.1 113.5,205.6 114.5,195.5 115.5,186.3 116.5,207.6 117.5,191.1 118.5,189.5 119.5,207.9 120.5,187.8 121.5,192.9 122.5,207.1 123.5,185.6 124.5,196.0 125.5,205.8 126.5,184.4 127.5,198.4 128.5,204.4 129.5,183.9 130.5,200.1 131.5,203.1 132.5,183.6 133.5,201.2 134.5,202.3 135.5,183.6 136.5,201.7 137.5,202.0 138.5,183.6 139.5,201.7 140.5,202.2 141.5,183.6 142.5,201.1 143.5,203.0 144.5,183.7 145.5,199.9 146.5,204.1 147.5,184.1 148.5,198.0 149.5,205.6 150.5,184.9 151.5,195.5 152.5,206.9 153.5,186.6 154.5,192.4 155.5,207.9 156.5,189.3 157.5,189.0 158.5,207.8 159.5,193.1 160.5,185.9 161.5,206.3 162.5,197.6 163.5,184.0 164.5,203.0 165.5,202.2 166.5,183.8 167.5,198.2 168.5,206.1 169.5,186.0 170.5,192.4 171.5,208.0 172.5,190.8 173.5,187.1 174.5,206.7 175.5,197.3 176.5,183.9 177.5,202.0 178.5,203.8 179.5,184.6 180.5,194.7 181.5,207.7 182.5,189.8 183.5,187.4 184.5,206.7 185.5,198.0 186.5,183.7 187.5,200.2 188.5,205.6 189.5,186.3 190.5,190.9 191.5,207.8 192.5,194.9 193.5,184.2 194.5,202.2 195.5,204.5 196.5,185.6 197.5,191.5 198.5,207.9 199.5,195.2 200.5,184.0 201.5,200.9 202.5,205.8 203.5,187.1 204.5,188.8 205.5,206.8 206.5,199.3 207.5,183.7 208.5,195.8 209.5,207.9 210.5,192.6 211.5,184.5 212.5,201.7 213.5,205.8 214.5,187.8 215.5,187.4 216.5,205.3 217.5,202.6 218.5,185.2 219.5,190.5 220.5,207.1 221.5,199.7 222.5,184.0 223.5,193.1 224.5,207.8 225.5,197.6 226.5,183.7 227.5,194.7 228.5,208.0 229.5,196.4 230.5,183.6 231.5,195.3 232.5,208.0 233.5,196.4 234.5,183.6 235.5,194.8 236.5,207.9 237.5,197.4 238.5,183.8 239.5,193.3 240.5,207.6 241.5,199.4 242.5,184.4 243.5,190.8 244.5,206.6 245.5,202.3 246.5,186.0 247.5,187.7 248.5,204.2 249.5,205.4 250.5,189.3 251.5,184.9 252.5,200.0 253.5,207.7 254.5,194.4 255.5,183.6 256.5,194.0 257.5,207.5 258.5,200.9 259.5,185.6 260.5,187.7 261.5,203.5 262.5,206.4 263.5,191.7 264.5,183.8 265.5,195.7 266.5,207.8 267.5,200.4 268.5,185.6 269.5,187.1 270.5,202.4 271.5,207.2 272.5,194.1 273.5,183.6 274.5,192.0 275.5,206.2 276.5,204.5 277.5,189.6 278.5,184.1 279.5,196.1 280.5,207.7 281.5,201.7 282.5,187.1 283.5,185.2 284.5,198.6 285.5,208.0 286.5,200.0 287.5,186.1 288.5,185.8 289.5,199.5 290.5,208.0 291.5,199.8 292.5,186.1 293.5,185.6 294.5,198.8 295.5,207.9 296.5,201.1 297.5,187.3 298.5,184.6 299.5,196.4 300.5,207.4 301.5,203.6 302.5,190.0 303.5,183.7 304.5,192.5 305.5,205.3 306.5,206.5 307.5,194.7 308.5,184.2 309.5,187.6 310.5,200.7 311.5,208.0 312.5,201.1 313.5,188.1 314.5,183.9 315.5,193.2 316.5,205.4 317.5,206.8 318.5,196.0 319.5,185.0 320.5,185.8 321.5,197.3 322.5,207.2 323.5,205.0 324.5,193.1 325.5,184.1 326.5,187.2 327.5,199.1 328.5,207.6 329.5,204.3 330.5,192.5 331.5,184.0 332.5,187.1 333.5,198.6 334.5,207.4 335.5,205.2 336.5,194.2 337.5,184.7 338.5,185.5 339.5,195.7 340.5,206.0 341.5,207.0 342.5,198.1 343.5,187.2 344.5,183.8 345.5,190.7 346.5,202.0 347.5,208.0 348.5,203.7 349.5,193.0 350.5,184.6 351.5,185.3 352.5,194.4 353.5,204.6 354.5,207.9 355.5,201.7 356.5,191.0 357.5,184.0 358.5,185.9 359.5,195.2 360.5,204.8 361.5,207.9 362.5,202.2 363.5,192.0 364.5,184.5 365.5,184.9 366.5,192.8 367.5,202.7 368.5,207.9 369.5,205.0 370.5,196.1 371.5,187.0 372.5,183.6 373.5,188.0 374.5,197.2 375.5,205.5 376.5,207.9 377.5,202.9 378.5,193.7 379.5,185.8 380.5,183.8 381.5,188.7 382.5,197.6 383.5,205.5 384.5,207.9 385.5,203.8 386.5,195.3 387.5,187.2 388.5,183.6 389.5,186.4 390.5,193.9 391.5,202.4 392.5,207.5 393.5,206.9 394.5,200.8 395.5,192.4 396.5,185.7 397.5,183.7 398.5,187.2 399.5,194.6 400.5,202.5 401.5,207.4 402.5,207.3 403.5,202.2 404.5,194.6 405.5,187.4 406.5,183.8 407.5,185.0 408.5,190.4 409.5,197.9 410.5,204.6 411.5,207.9 412.5,206.7 413.5,201.5 414.5,194.4 415.5,187.8 416.5,184.0 417.5,184.3 418.5,188.5 419.5,195.0 420.5,201.8 421.5,206.6 422.5,208.0 423.5,205.6 424.5,200.3 425.5,193.7 426.5,187.7 427.5,184.2 428.5,183.9 429.5,186.9 430.5,192.3 431.5,198.6 432.5,204.1 433.5,207.4 434.5,207.8 435.5,205.2 436.5,200.3 437.5,194.5 438.5,189.0 439.5,185.1 440.5,183.6 441.5,184.8 442.5,188.4 443.5,193.4 444.5,198.9 445.5,203.7 446.5,206.9 447.5,208.0 448.5,206.7 449.5,203.5 450.5,198.9 451.5,193.9 452.5,189.2 453.5,185.6 454.5,183.8 455.5,183.9 456.5,185.8 457.5,189.2 458.5,193.6 459.5,198.2 460.5,202.4 461.5,205.7 462.5,207.6 463.5,207.9 464.5,206.8 465.5,204.3 466.5,200.9 467.5,196.9 468.5,192.8 469.5,189.2 470.5,186.2 471.5,184.3 472.5,183.6 473.5,184.1 474.5,185.6 475.5,188.0 476.5,191.1 477.5,194.5 478.5,197.9 479.5,201.2 480.5,203.9 481.5,206.1 482.5,207.4 483.5,208.0 484.5,207.7 485.5,206.7 486.5,205.1 487.5,202.9 488.5,200.4 489.5,197.7 490.5,195.0 491.5,192.4 492.5,189.9 493.5,187.8 494.5,186.1 495.5,184.8 496.5,184.0 497.5,183.6 498.5,183.7 499.5,184.2 500.5,185.0 501.5,186.1 502.5,187.4 503.5,189.0 504.5,190.6 505.5,192.4 506.5,194.1 507.5,195.8 508.5,197.5 509.5,199.1 510.5,200.5 511.5,201.9" fill="none" stroke="#fff" stroke-width="1"/>
<line x1="0" y1="64.5" x2="512" y2="64.5" stroke="#80ff80" stroke-width="1"/>
<line x1="0" y1="200.5" x2="512" y2="200.5" stroke="#80ff80" stroke-width="1"/>
</svg>
<div class="gl" style="left:0.5px;top:50.5px;">Left</div>
<div class="gl" style="left:0.5px;top:186.5px;">Right</div>
</div>
</div></div>
</div>
</body></html>
